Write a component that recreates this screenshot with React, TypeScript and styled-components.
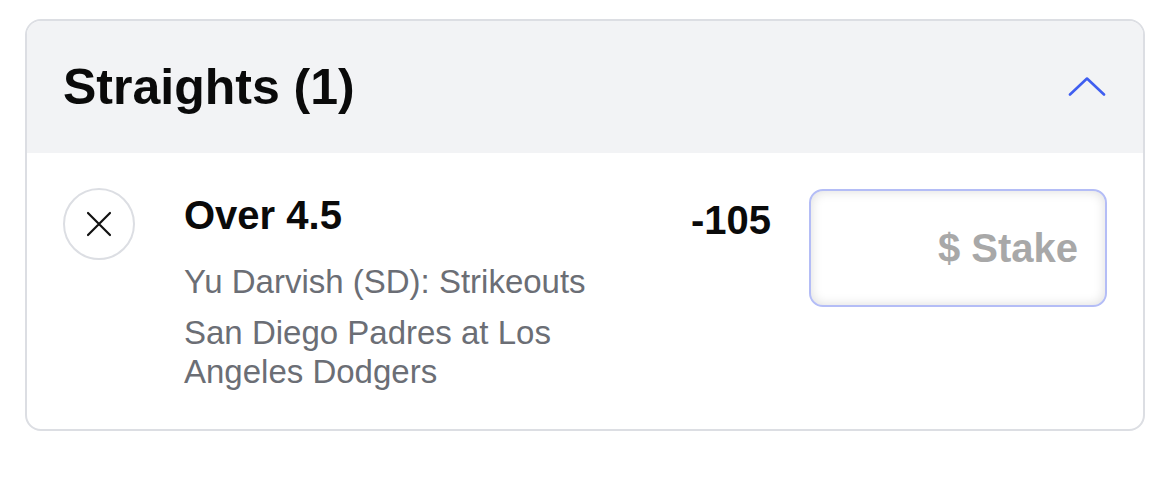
import React from 'react';
import styled, { createGlobalStyle } from 'styled-components';

const GlobalStyle = createGlobalStyle`
  body {
    margin: 0;
    padding: 0;
    background: #ffffff;
    font-family: "Liberation Sans", Arial, sans-serif;
  }
`;

const Page = styled.div`
  padding: 19px 25px;
`;

const Card = styled.section`
  border: 2px solid #dcdee3;
  border-radius: 16px;
  overflow: hidden;
  background: #ffffff;
`;

const Header = styled.div`
  display: flex;
  align-items: center;
  justify-content: space-between;
  height: 132px;
  padding: 0 36px;
  background: #f2f3f5;
`;

const Title = styled.h2`
  margin: 0;
  font-size: 50px;
  font-weight: 700;
  color: #0a0a0a;
  letter-spacing: 0px;
`;

const ToggleButton = styled.button`
  display: flex;
  align-items: center;
  justify-content: center;
  width: 40px;
  height: 40px;
  padding: 0;
  border: none;
  background: transparent;
  cursor: pointer;
`;

const Body = styled.div`
  display: grid;
  grid-template-columns: 72px 1fr auto 298px;
  column-gap: 49px;
  align-items: start;
  padding: 35px 36px 38px;
`;

const CloseButton = styled.button`
  display: flex;
  align-items: center;
  justify-content: center;
  width: 72px;
  height: 72px;
  padding: 0;
  border: 2px solid #dcdee3;
  border-radius: 50%;
  background: #ffffff;
  cursor: pointer;
`;

const Info = styled.div`
  display: flex;
  flex-direction: column;
  max-width: 440px;
  padding-top: 5px;
`;

const Selection = styled.div`
  font-size: 40px;
  font-weight: 700;
  color: #0a0a0a;
  line-height: 44px;
  margin-bottom: 25px;
`;

const Detail = styled.div<{ $gap?: number }>`
  font-size: 33px;
  color: #6b6e75;
  line-height: 39px;
  margin-bottom: ${(p) => p.$gap ?? 0}px;
`;

const Odds = styled.div`
  font-size: 40px;
  font-weight: 700;
  color: #0a0a0a;
  line-height: 44px;
  padding-top: 10px;
  margin-right: -11px;
`;

const StakeInput = styled.input`
  box-sizing: border-box;
  width: 298px;
  height: 118px;
  margin-top: 1px;
  padding: 0 27px;
  border: 2px solid #b4bdf6;
  border-radius: 14px;
  background: #ffffff;
  box-shadow: inset 0 0 12px rgba(0, 0, 0, 0.14);
  font-family: "Liberation Sans", Arial, sans-serif;
  font-size: 40px;
  font-weight: 700;
  text-align: right;
  color: #0a0a0a;
  outline: none;

  &::placeholder {
    color: #a8a8a8;
  }
`;

const App = () => {
  return (
    <Page>
      <GlobalStyle />
      <Card>
        <Header>
          <Title>Straights (1)</Title>
          <ToggleButton aria-label="Collapse">
            <svg width="38" height="20" viewBox="0 0 38 20" fill="none">
              <path d="M2 17.5 L19 1.5 L36 17.5" stroke="#3f5ef0" strokeWidth="2.6" strokeLinecap="round" strokeLinejoin="round" />
            </svg>
          </ToggleButton>
        </Header>
        <Body>
          <CloseButton aria-label="Remove">
            <svg width="26" height="26" viewBox="0 0 26 26" fill="none">
              <path d="M2 2 L24 24 M24 2 L2 24" stroke="#111" strokeWidth="2.2" strokeLinecap="round" />
            </svg>
          </CloseButton>
          <Info>
            <Selection>Over 4.5</Selection>
            <Detail $gap={12}>Yu Darvish (SD): Strikeouts</Detail>
            <Detail>San Diego Padres at Los Angeles Dodgers</Detail>
          </Info>
          <Odds>-105</Odds>
          <StakeInput placeholder="$ Stake" />
        </Body>
      </Card>
    </Page>
  );
};

export default App;
